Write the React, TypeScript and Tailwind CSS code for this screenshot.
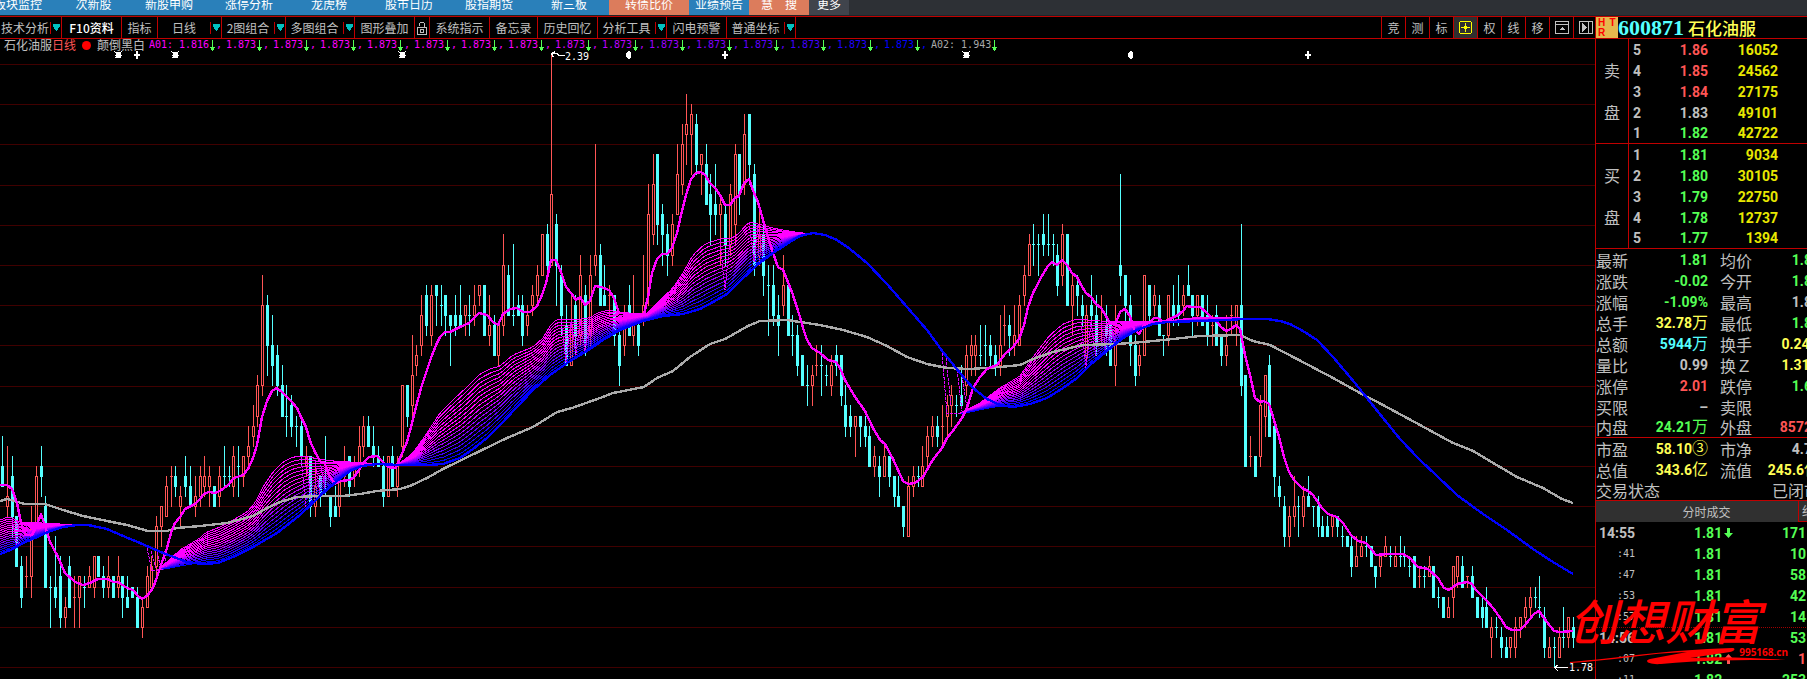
import type { ReactNode } from "react";
import clsx from "clsx";

type Point = [number, number];

const NAV = [
  { text: "板块监控", cls: "w-[58px] justify-end pr-4 bg-[#2a80ba]" },
  { text: "次新股", cls: "w-[71px] justify-center bg-[#2a80ba]" },
  { text: "新股申购", cls: "w-20 justify-center bg-[#2a80ba]" },
  { text: "涨停分析", cls: "w-20 justify-center bg-[#2a80ba]" },
  { text: "龙虎榜", cls: "w-20 justify-center bg-[#2a80ba]" },
  { text: "股市日历", cls: "w-20 justify-center bg-[#2a80ba]" },
  { text: "股指期货", cls: "w-20 justify-center bg-[#2a80ba]" },
  { text: "新三板", cls: "w-20 justify-center bg-[#2a80ba]" },
  { text: "转债比价", cls: "w-20 justify-center bg-[#dc7c5c]" },
  { text: "业绩预告", cls: "w-[60px] justify-center bg-[#2a80ba]" },
  { text: "慧　搜", cls: "w-[60px] justify-center bg-[#dc7c5c]" },
  { text: "更多", cls: "w-10 justify-center bg-[#40444c]" },
];

const TOOLS = [
  { text: "技术分析", cls: "w-[62px]", caret: true },
  { text: "F10资料", cls: "w-[60px] text-white font-medium" },
  { text: "指标", cls: "w-9" },
  { text: "日线", cls: "w-16", caret: true },
  { text: "2图组合", cls: "w-16", caret: true },
  { text: "多图组合", cls: "w-[69px]", caret: true },
  { text: "图形叠加", cls: "w-[60px]" },
  { text: "lock", cls: "w-[15px]" },
  { text: "系统指示", cls: "w-[60px]" },
  { text: "备忘录", cls: "w-12" },
  { text: "历史回忆", cls: "w-[60px]" },
  { text: "分析工具", cls: "w-[69px]", caret: true },
  { text: "闪电预警", cls: "w-[60px]" },
  { text: "普通坐标", cls: "w-[69px]", caret: true },
];

const ASKS = [
  ["5", "1.86", "16052", "text-[#ff5555]"],
  ["4", "1.85", "24562", "text-[#ff5555]"],
  ["3", "1.84", "27175", "text-[#ff5555]"],
  ["2", "1.83", "49101", "text-[#c0c0c0]"],
  ["1", "1.82", "42722", "text-[#55ff55]"],
];

const BIDS = [
  ["1", "1.81", "9034", "text-[#55ff55]"],
  ["2", "1.80", "30105", "text-[#55ff55]"],
  ["3", "1.79", "22750", "text-[#55ff55]"],
  ["4", "1.78", "12737", "text-[#55ff55]"],
  ["5", "1.77", "1394", "text-[#55ff55]"],
];

const GREEN = "text-[#55ff55]";
const RED = "text-[#ff5555]";
const YELLOW = "text-[#ffff55]";
const CYAN = "text-[#55ffff]";
const GRAY = "text-[#c0c0c0]";

const QUOTE = [
  ["最新", "1.81", GREEN, "均价", "1.81", GREEN],
  ["涨跌", "-0.02", GREEN, "今开", "1.82", GREEN],
  ["涨幅", "-1.09%", GREEN, "最高", "1.83", GRAY],
  ["总手", "32.78万", YELLOW, "最低", "1.80", GREEN],
  ["总额", "5944万", CYAN, "换手", "0.24%", YELLOW],
  ["量比", "0.99", GRAY, "换Ｚ", "1.31%", YELLOW],
  ["涨停", "2.01", RED, "跌停", "1.65", GREEN],
  ["买限", "–", GRAY, "卖限", "", GRAY],
  ["内盘", "24.21万", GREEN, "外盘", "85727", RED],
];

const VALUATION = [
  ["市盈", "58.10③", YELLOW, "市净", "4.70", GRAY],
  ["总值", "343.6亿", YELLOW, "流值", "245.6亿", YELLOW],
];

const TRADES = [
  { time: "14:55", price: "1.81", dir: "down", vol: "171" },
  { time: ":41", price: "1.81", vol: "10" },
  { time: ":47", price: "1.81", vol: "58" },
  { time: ":53", price: "1.81", vol: "42" },
  { time: ":57", price: "1.81", vol: "14" },
  { time: "14:56", price: "1.81", vol: "53" },
  { time: ":07", price: "1.82", dir: "up", vol: "1" },
  { time: ":11", price: "1.82", vol: "253" },
];

// high, body top, body bottom, low in ticks above 1.78, then r(ise) or f(all)
const CANDLES = `
23 20 18 18 f,22 17 16 15 r,21 19 15 13 f,15 15 10 10 f,11 10 7 6 f,11 9 9 8 r,16 14 9 7 r,20 19 13 13 r,22 20 19 17 f,17 16 8 8 f,
9 8 8 4 f,13 8 7 6 f,11 9 5 4 f,7 6 5 4 r,11 10 6 6 f,9 7 7 4 r,9 9 7 4 r,9 8 8 6 f,10 9 8 8 r,11 11 8 7 r,
11 11 9 9 f,10 9 8 7 f,11 9 8 7 r,9 9 7 7 f,11 9 8 7 r,9 9 7 5 f,9 7 6 6 f,8 8 7 7 f,8 7 4 4 f,7 6 4 3 r,
10 9 6 6 r,11 10 8 8 r,15 14 10 9 r,16 16 14 12 r,19 18 15 15 r,20 19 19 16 r,20 19 18 17 f,18 17 16 14 r,21 19 18 17 f,20 18 16 16 f,
19 17 16 15 r,20 19 17 16 r,21 19 18 17 r,20 19 18 16 r,18 18 16 16 f,20 19 17 16 r,22 19 19 18 f,20 19 19 18 f,22 21 18 17 r,22 20 20 17 f,
21 21 19 18 r,24 22 21 20 r,26 24 23 22 r,29 28 25 24 r,39 36 28 27 r,37 36 32 29 f,35 32 30 28 f,32 31 28 27 f,30 28 25 25 f,28 25 25 23 f,
27 26 24 23 f,25 24 24 22 f,25 24 21 20 f,22 21 20 19 r,21 21 16 15 f,20 18 16 15 r,19 19 17 16 f,23 17 17 17 f,17 17 15 14 f,18 16 15 15 f,
20 19 16 15 r,22 20 19 18 r,21 21 18 17 f,21 20 19 18 r,24 22 20 19 r,25 24 22 21 r,25 24 22 22 f,24 22 21 20 f,22 21 20 20 f,21 20 17 16 f,
21 21 17 17 r,22 21 18 18 f,21 20 18 17 r,28 28 22 21 r,28 28 25 24 f,33 29 26 25 r,32 31 30 29 r,37 35 32 31 r,38 37 34 33 f,38 37 33 32 r,
38 38 37 34 f,38 36 36 34 f,37 37 35 33 f,35 35 34 30 f,37 35 34 33 f,38 35 34 34 f,36 36 35 33 r,37 35 35 33 f,38 36 35 34 r,38 38 37 36 r,
38 38 33 33 f,37 34 33 32 r,35 34 31 31 f,34 34 31 30 r,43 40 34 33 r,40 39 35 35 f,42 35 35 34 f,37 36 35 35 f,37 36 33 32 f,36 35 34 33 r,
38 37 36 35 r,40 39 37 36 r,43 43 39 39 r,44 43 40 39 f,61 47 40 40 r,45 44 40 36 f,40 39 35 33 f,36 34 30 30 f,37 34 30 30 r,37 36 33 31 f,
41 39 33 32 r,38 37 32 31 f,41 39 33 32 r,52 41 40 39 r,42 41 36 36 f,40 37 36 36 f,38 37 37 35 r,37 37 33 32 f,35 33 30 28 f,36 35 32 31 r,
38 36 33 33 f,39 34 33 32 r,35 34 32 31 f,41 36 35 34 r,48 45 37 36 r,51 48 43 42 r,51 51 44 42 f,46 45 43 40 f,44 43 41 39 f,45 44 41 40 r,
52 49 45 45 r,54 52 48 47 r,57 54 53 50 r,56 55 53 49 r,55 54 50 49 f,51 51 50 47 r,52 50 46 46 f,49 47 45 42 f,50 46 45 43 f,47 46 45 40 r,
46 45 42 40 f,48 47 42 41 r,52 51 44 42 r,51 51 47 45 f,55 53 48 47 r,55 55 50 48 f,50 49 40 39 f,46 43 41 40 r,44 43 39 37 f,40 38 38 33 f,
40 38 35 34 f,37 35 34 31 f,41 38 36 35 r,38 38 33 33 f,35 33 33 31 f,34 33 30 29 f,31 31 28 28 f,30 28 28 26 f,30 29 28 26 r,32 30 30 29 r,
32 30 30 27 f,30 29 29 28 f,31 30 28 27 r,32 31 30 29 f,31 31 27 26 f,28 26 24 23 f,26 25 24 23 f,25 25 24 21 r,25 25 24 22 f,25 24 23 22 f,
24 23 20 20 f,22 21 20 19 r,21 20 19 17 f,22 21 19 19 r,21 21 19 18 f,19 19 17 16 f,19 17 16 16 f,16 16 14 13 f,19 18 13 13 r,20 19 18 17 r,
20 19 19 18 f,22 20 18 18 r,24 23 21 20 r,25 24 23 22 r,25 24 23 22 f,26 24 24 22 r,27 26 25 23 r,28 27 26 24 r,27 26 26 25 f,30 27 26 26 f,
32 31 28 27 r,33 32 31 29 r,33 32 31 29 r,34 31 31 30 f,34 32 32 30 f,33 32 31 30 f,32 31 30 29 f,35 32 30 29 r,36 34 34 32 r,35 34 33 31 f,
36 33 32 31 r,37 36 32 32 r,40 39 37 36 r,43 42 39 39 r,44 42 42 40 f,43 42 42 39 f,45 43 42 41 f,45 42 42 41 f,43 42 42 40 f,42 41 38 37 f,
44 43 39 38 r,43 43 36 36 f,39 38 36 33 r,39 38 37 35 f,37 36 35 34 f,36 35 31 30 r,39 36 35 34 f,37 35 32 31 f,37 34 34 32 r,36 34 33 31 f,
34 34 30 30 f,36 32 30 28 r,49 40 39 37 f,39 39 36 34 f,37 36 32 30 f,33 32 29 28 f,32 31 30 29 r,39 39 31 31 r,38 38 35 34 f,38 37 36 35 r,
37 36 33 33 f,33 33 33 31 f,37 37 33 32 r,38 36 35 34 f,39 36 35 34 f,38 37 36 35 r,40 38 37 37 f,37 37 35 33 f,37 37 35 34 r,37 37 34 34 f,
37 35 33 32 f,35 34 34 32 r,36 35 32 32 f,33 33 31 30 f,35 32 31 30 r,36 35 35 33 r,36 36 34 32 r,44 36 28 27 f,29 29 20 20 f,23 21 21 20 r,
21 21 19 19 f,27 26 21 20 r,29 29 25 23 r,31 30 23 23 f,24 24 19 17 f,19 18 17 16 f,17 16 13 12 f,16 15 13 12 r,19 16 15 14 r,17 16 16 13 f,
18 17 15 14 r,19 17 16 16 f,16 16 16 14 f,17 16 14 13 f,15 14 13 13 f,15 14 13 13 f,15 15 14 13 r,15 15 14 13 f,14 13 13 12 f,13 13 12 12 f,
13 12 10 9 f,13 11 10 10 r,13 12 11 11 r,13 12 12 11 f,12 12 10 10 f,10 10 9 8 f,11 11 10 9 r,13 12 11 11 r,12 11 11 10 f,12 11 10 10 r,
13 11 11 10 f,12 11 11 10 f,11 10 10 9 f,11 11 8 8 f,10 9 9 8 r,10 9 9 8 f,11 10 9 9 r,10 10 7 7 f,8 7 7 6 f,7 7 5 5 f,
7 6 5 5 r,10 10 7 5 r,11 11 9 8 r,11 10 8 8 f,9 9 9 8 r,10 9 7 7 f,7 7 5 5 f,7 6 5 4 f,8 6 4 4 f,5 4 3 1 r,
5 4 4 3 f,4 3 2 1 f,3 2 1 1 f,3 3 2 1 r,5 4 2 1 r,5 5 4 3 r,7 6 5 4 r,8 7 6 5 r,8 7 7 6 f,9 6 6 5 f,
6 5 2 1 f,3 2 1 1 r,3 2 2 0 f,4 3 1 1 r,6 3 3 2 f,5 5 3 2 r,5 4 3 2 f`
  .split(",")
  .map((row) => {
    const [high, top, bottom, low, kind] = row.trim().split(" ");
    return { high: +high, top: +top, bottom: +bottom, low: +low, rise: kind === "r" };
  });

const FAST =
  "0,485 7,485 12,489 17,503 21,523 26,535 32,535 36,527 41,514 45,526 50,542 57,555 65,573 75,582 83,585 90,583 98,579 108,579 113,582 118,582 127,588 133,590 138,596 142,599 147,596 153,588 157,577 161,565 167,548 171,533 175,523 180,517 185,509 195,504 200,499 204,494 209,492 215,493 220,491 228,485 234,478 243,475 248,469 253,458 257,445 262,417 267,401 272,391 277,388 283,393 291,401 297,408 301,417 306,427 310,441 315,452 320,461 325,464 330,477 335,484 340,481 350,480 354,477 359,470 363,463 369,457 377,456 383,462 388,467 396,468 400,458 407,442 412,423 416,407 421,388 426,373 431,358 436,345 440,337 445,332 450,332 460,327 469,323 479,313 487,315 493,322 498,325 503,314 510,309 517,308 523,312 530,312 537,306 542,295 546,283 551,260 556,260 561,272 566,287 571,293 576,300 580,297 585,305 590,301 595,286 601,287 609,290 614,298 619,313 633,314 644,314 648,297 652,273 657,259 662,254 667,254 672,248 677,233 681,215 686,195 691,179 696,173 701,172 705,175 710,183 715,188 720,195 725,205 730,205 735,198 739,196 744,183 749,179 754,193 758,202 763,220 768,237 773,253 778,267 783,270 792,292 800,317 803,328 807,340 812,348 820,353 828,360 836,362 840,368 845,380 855,397 865,411 873,428 880,440 885,444 893,459 898,470 903,481 908,484 915,483 923,477 928,468 932,461 942,448 947,438 952,432 962,418 967,408 973,388 980,377 987,369 997,365 1005,354 1013,347 1019,339 1024,325 1028,307 1033,293 1043,274 1048,266 1052,262 1057,265 1062,260 1067,265 1072,273 1077,277 1081,285 1086,293 1091,297 1096,304 1101,308 1106,316 1110,323 1115,325 1120,312 1125,309 1130,316 1134,329 1139,334 1144,325 1150,322 1154,318 1158,318 1163,322 1168,320 1178,315 1183,311 1187,306 1192,307 1200,307 1207,313 1211,317 1216,320 1221,327 1226,331 1231,329 1236,325 1240,329 1245,355 1250,375 1255,398 1260,402 1264,401 1269,404 1274,420 1279,437 1284,457 1289,472 1294,480 1302,488 1308,491 1313,495 1322,508 1328,514 1337,517 1343,523 1351,535 1358,541 1366,543 1376,555 1387,554 1403,554 1410,558 1418,567 1428,569 1438,578 1444,588 1449,590 1457,584 1467,582 1472,584 1476,590 1486,600 1493,608 1501,619 1506,627 1512,630 1520,630 1525,625 1534,614 1539,611 1544,618 1554,631 1560,632 1573,631";

const SLOW =
  "0,554 13,549 23,543 37,537 48,532 63,527 77,525 88,525 107,529 123,536 140,543 163,553 187,562 203,564 218,563 233,557 253,547 277,533 300,515 320,496 337,481 350,471 362,466 377,464 400,465 427,465 443,464 460,458 473,449 487,438 500,425 517,407 533,390 550,375 567,363 587,351 603,340 620,330 643,321 663,316 683,314 700,309 713,302 727,294 740,281 757,265 773,253 790,242 800,236 813,233 825,235 837,240 850,249 867,263 887,284 907,307 927,330 943,352 960,373 973,388 987,399 1000,405 1013,407 1030,404 1047,398 1063,388 1077,378 1090,365 1107,351 1123,338 1137,330 1153,324 1167,322 1200,321 1227,320 1243,319 1267,319 1280,321 1290,324 1303,331 1317,340 1333,357 1350,377 1367,398 1383,418 1400,439 1420,460 1437,476 1457,495 1483,514 1507,530 1533,549 1553,562 1573,574";

const BASE =
  "0,501 7,499 25,504 45,504 63,510 83,516 107,521 127,525 148,531 167,531 177,528 200,526 227,523 253,516 267,508 280,502 297,497 317,496 343,496 360,494 377,491 400,489 410,486 427,478 443,469 480,451 507,438 533,427 557,412 572,408 600,398 613,393 644,387 657,378 673,371 690,357 710,344 725,339 748,326 760,321 787,320 800,322 820,325 843,330 867,337 887,346 907,357 927,364 947,368 970,369 1000,367 1020,365 1033,359 1053,352 1083,345 1117,344 1143,342 1173,339 1200,336 1240,335 1253,341 1270,345 1297,359 1333,378 1360,393 1383,405 1420,425 1453,443 1473,451 1500,467 1517,477 1543,488 1562,499 1573,503";

// upper edge of each fan of averages, and the floor it starts from
const FANS = [
  { top: "0,520 8,517 12,518 20,522 43,523 77,525", floor: "" },
  {
    top: "160,568 167,562 180,550 200,538 205,533 220,527 233,520 247,512 255,503 263,487 273,472 283,462 293,457 302,456 310,457 317,459 333,461 367,463 387,464",
    floor: "160,570 187,566 205,564",
  },
  {
    top: "395,465 400,463 413,453 427,433 440,413 453,400 467,387 480,374 490,369 500,366 513,355 533,347 543,338 552,323 558,319 573,320 590,318 597,313 609,310 620,313 647,313 657,303 673,288 683,273 693,255 705,244 720,239 733,238 740,232 749,222 758,224 777,229 800,233 813,233",
    floor: "",
  },
  {
    top: "960,413 980,403 1000,388 1020,376 1033,357 1050,335 1063,324 1077,319 1100,321 1133,322 1167,321 1200,317 1240,318",
    floor: "960,414 987,409 1004,407",
  },
];

const SPIKES = [
  "12,519 17,545 21,541", "17,521 21,538 26,534", "26,524 31,537",
  "147,548 152,571 163,569", "151,551 156,568", "157,552 161,569", "164,554 167,567",
  "301,457 306,507", "306,457 311,500", "315,460 320,495", "320,461 325,488",
  "561,320 566,362 571,321", "571,321 576,355 580,321", "580,320 585,351 590,319",
  "720,240 725,290 730,240", "749,222 754,262 758,225", "758,225 763,257", "767,228 771,250",
  "942,353 947,414 962,413", "946,358 951,405", "957,370 962,411", "962,376 967,408",
  "1081,322 1086,368 1091,322", "1091,321 1096,357", "1101,321 1106,350", "1110,322 1115,342",
];

const MARKS: { x: number; kind: "star" | "plus" | "pin" }[] = [
  { x: 118, kind: "star" },
  { x: 136, kind: "plus" },
  { x: 175, kind: "star" },
  { x: 402, kind: "star" },
  { x: 628, kind: "pin" },
  { x: 724, kind: "plus" },
  { x: 966, kind: "star" },
  { x: 1130, kind: "pin" },
  { x: 1307, kind: "plus" },
];

const FAN_LINES = 16;

const parse = (s: string): Point[] =>
  s ? s.split(" ").map((p) => p.split(",").map(Number) as Point) : [];

function valueAt(points: Point[], x: number) {
  for (let i = 1; i < points.length; i++) {
    const [x0, y0] = points[i - 1];
    const [x1, y1] = points[i];
    if (x >= x0 && x <= x1) return y0 + ((y1 - y0) * (x - x0)) / (x1 - x0);
  }
  return -Infinity;
}

const slowPoints = parse(SLOW);
const tickY = (n: number) => Math.round(667 - n * 10.06);
const fade = (i: number) => `rgb(${Math.round(Math.min(255, (255 * (15 - i)) / 8))},0,255)`;

function fanLines(top: string, floor: string) {
  const upper = parse(top);
  const lower = parse(floor);
  const start = upper[0][0];
  const end = upper[upper.length - 1][0];
  return Array.from({ length: FAN_LINES }, (_, k) => {
    const t = k / FAN_LINES;
    const pts: string[] = [];
    for (let x = start; x <= end; x += 4) {
      const a = valueAt(upper, x);
      const b = Math.max(valueAt(slowPoints, x), valueAt(lower, x));
      pts.push(`${x},${(a + (b - a) * t).toFixed(1)}`);
    }
    return pts.join(" ");
  });
}

function Candle({ index }: { index: number }) {
  const { high, top, bottom, low, rise } = CANDLES[index];
  const x = Math.floor(2.5 + (index * 400) / 83);
  const color = rise ? "#ff5555" : "#55ffff";
  const y1 = tickY(top);
  const y2 = tickY(bottom);
  return (
    <g fill={color}>
      <rect x={x} y={tickY(high)} width={1} height={tickY(low) - tickY(high) + 1} />
      {rise && top !== bottom ? (
        <rect x={x - 0.5} y={y1 + 0.5} width={2} height={y2 - y1} fill="#000" stroke={color} />
      ) : (
        <rect x={x - 1} y={y1} width={3} height={y2 - y1 + 1} />
      )}
    </g>
  );
}

function Mark({ x, kind }: { x: number; kind: "star" | "plus" | "pin" }) {
  if (kind === "plus") return <path d={`M${x} 51h2v3h2v2h-2v3h-2v-3h-2v-2h2z`} fill="#fff" />;
  if (kind === "pin") return <path d={`M${x} 51h1l2 2v4l-2 2h-1l-2-2v-4z`} fill="#fff" />;
  return (
    <g stroke="#fff">
      <rect x={x - 2} y={52} width={5} height={6} fill="#fff" stroke="none" />
      <path d={`M${x - 3.5} 51.5l7 7M${x + 3.5} 51.5l-7 7M${x - 3.5} 55h7`} />
    </g>
  );
}

function Chart() {
  return (
    <svg viewBox="0 53 1595 626" className="block w-full overflow-visible" shapeRendering="crispEdges" role="img" aria-label="石化油服 日线">
      {Array.from({ length: 16 }, (_, i) => (
        <rect key={i} x={0} y={Math.round(64 + i * 40.2)} width={1595} height={1} fill="#400000" />
      ))}
      {CANDLES.map((_, i) => (
        <Candle key={i} index={i} />
      ))}
      <g fill="none" strokeWidth={1}>
        {FANS.map((fan) =>
          fanLines(fan.top, fan.floor).map((pts, k) => (
            <polyline key={`${fan.top.length}-${k}`} points={pts} stroke={fade(k)} />
          )),
        )}
        {SPIKES.map((pts) => (
          <polyline key={pts} points={pts} stroke="#e000ff" strokeDasharray="3 1" />
        ))}
      </g>
      <g fill="none" strokeWidth={2.4} strokeLinejoin="round">
        <polyline points={BASE} stroke="#aaaaaa" />
        <polyline points={FAST} stroke="#ff00ff" />
        <polyline points={SLOW} stroke="#0000ff" />
      </g>
      {MARKS.map((m) => (
        <Mark key={m.x} {...m} />
      ))}
      <path d="M565 55.5h-6l-2-2h-6M551.5 53.5l4-2M551.5 53.5l2 4" fill="none" stroke="#fff" />
      <path d="M1554 667.5h14M1554.5 667.5l4-3M1554.5 667.5l4 4" fill="none" stroke="#fff" />
      <g fill="#fff" className="font-['DejaVu_Sans_Mono',monospace] text-[10px]">
        <text x={565} y={60}>2.39</text>
        <text x={1569} y={671}>1.78</text>
      </g>
    </svg>
  );
}

function DownArrow() {
  return (
    <svg viewBox="0 0 5 11" className="h-[11px] w-[5px]" shapeRendering="crispEdges" aria-hidden>
      <path d="M2 0h1v7h2l-2 4h-1l-2-4h2z" fill="#55ff55" />
    </svg>
  );
}

function Legend() {
  return (
    <div className="flex h-[14px] items-center overflow-hidden whitespace-nowrap pb-[2px] pl-1 text-[12px] leading-[14px]">
      <span className="w-12 shrink-0">石化油服</span>
      <span className="w-6 shrink-0 text-[#ff5555]">日线</span>
      <span className="mx-[6px] size-[9px] shrink-0 rounded-full bg-[#ff0000]" />
      <span className="w-[52px] shrink-0">颠倒黑白</span>
      <div className="flex font-['DejaVu_Sans_Mono',monospace] text-[10px]">
        <span className="w-[30px] text-[#ff00ff]">A01:</span>
        {Array.from({ length: 16 }, (_, i) => (
          <span key={i} className="flex w-[47px] items-center gap-px" style={{ color: fade(i) }}>
            {i === 0 ? "1.816" : "1.873"}
            <DownArrow />,
          </span>
        ))}
        <span className="flex items-center gap-px text-[#aaaaaa]">
          A02: 1.943
          <DownArrow />
        </span>
      </div>
    </div>
  );
}

function LockIcon() {
  return (
    <svg viewBox="0 0 12 14" className="h-[14px] w-3" fill="none" stroke="#c0c0c0" shapeRendering="crispEdges" aria-hidden>
      <rect x="1.5" y="6.5" width="9" height="7" />
      <path d="M3.5 4.500v-2l1-1h3l1 1v4M4.500 8.500h3v3h-3z" />
    </svg>
  );
}

function ToolIcon({ children }: { children: ReactNode }) {
  return (
    <svg viewBox="0 0 14 14" className="size-[14px] shrink-0" fill="none" stroke="currentColor" shapeRendering="crispEdges" aria-hidden>
      {children}
    </svg>
  );
}

const toolButton = "flex h-full w-6 shrink-0 items-center justify-center border-l border-[#c00000]";

function Toolbar() {
  return (
    <div className="flex h-[23px] justify-between overflow-hidden border-y border-[#c00000] text-[12px]">
      <div className="flex">
        {TOOLS.map((t) => (
          <button key={t.text} aria-label={t.text} className={clsx("flex h-full shrink-0 items-center whitespace-nowrap border-r border-[#c00000]", t.cls)}>
            <span className="flex min-w-0 flex-1 justify-center">{t.text === "lock" ? <LockIcon /> : t.text}</span>
            {t.caret && (
              <span className="flex h-3 w-[11px] shrink-0 items-center justify-center border-l border-[#c00000]">
                <svg viewBox="0 0 7 7" className="size-[7px]" shapeRendering="crispEdges" aria-hidden>
                  <path d="M0 0h7v2L4 7H3L0 2z" fill="#00c0c0" />
                </svg>
              </span>
            )}
          </button>
        ))}
      </div>
      <div className="-mr-[2px] flex">
        <button className={toolButton}>竞</button>
        <button className={toolButton}>测</button>
        <button className={toolButton}>标</button>
        <button aria-label="十字光标" className={clsx(toolButton, "bg-[#303030] text-[#ffff00]")}>
          <ToolIcon>
            <rect x="0.500" y="0.500" width="12" height="12" rx="2" />
            <path d="M6.500 2v9M2 6.500h9M4.500 6.500l2-2 2 2-2 2z" />
          </ToolIcon>
        </button>
        <button className={toolButton}>权</button>
        <button className={toolButton}>线</button>
        <button className={toolButton}>移</button>
        <button aria-label="窗口" className={toolButton}>
          <ToolIcon>
            <path d="M0.500 0.500h13v12h-13zM0 3.500h14" />
            <path d="M7 6l3 3H4z" fill="currentColor" stroke="none" />
          </ToolIcon>
        </button>
        <button aria-label="侧栏" className={toolButton}>
          <ToolIcon>
            <path d="M0.500 0.500h13v12h-13zM9.500 0v13" />
            <path d="M3 2l5 4.500L3 11z" fill="currentColor" stroke="none" />
          </ToolIcon>
        </button>
      </div>
    </div>
  );
}

function Book({ side, rows }: { side: string; rows: string[][] }) {
  return (
    <table className="w-[212px] table-fixed border-separate border-spacing-0">
      <tbody>
        {rows.map(([level, price, vol, color], i) => (
          <tr key={level} className="h-[21px] leading-5 last:[&>td]:border-b">
            {i === 0 && (
              <th rowSpan={5} className="w-[33px] border-b border-r border-[#c00000] p-0 text-[16px] font-normal leading-[42px]">
                <span className="block">{side}</span>
                <span className="block">盘</span>
              </th>
            )}
            <td className="w-[18px] border-[#c00000] p-0 pl-1 font-['Roboto',sans-serif] text-[14px] font-bold">{level}</td>
            <td className={clsx("w-[61px] border-[#c00000] p-0 text-right font-['Roboto',sans-serif] text-[14px] font-bold", color)}>{price}</td>
            <td className="w-[70px] border-[#c00000] p-0 text-right font-['Roboto',sans-serif] text-[14px] font-bold text-[#e8e800]">{vol}</td>
            <td className="border-[#c00000] p-0" />
          </tr>
        ))}
      </tbody>
    </table>
  );
}

function Amount({ value }: { value: string }) {
  const unit = value.match(/[万亿③]$/)?.[0] ?? "";
  return (
    <span className="flex items-center justify-end">
      {unit ? value.slice(0, -1) : value}
      {unit && <span className="text-[16px] font-normal">{unit}</span>}
    </span>
  );
}

function Stats({ rows, ruled }: { rows: string[][]; ruled?: boolean }) {
  return (
    <table className="w-[224px] table-fixed border-separate border-spacing-0">
      <tbody>
        {rows.map(([a, av, ac, b, bv, bc]) => (
          <tr key={a} className={clsx("h-[21px] whitespace-nowrap leading-5", ruled && "last:[&>*]:border-b")}>
            <th className="w-9 border-[#c00000] p-0 text-left text-[16px] font-normal">{a}</th>
            <td className={clsx("w-[76px] border-[#c00000] p-0 font-['Roboto','Noto_Sans_CJK_SC',sans-serif] text-[14px] font-bold", ac)}>
              <Amount value={av} />
            </td>
            <th className="w-[60px] border-[#c00000] p-0 pl-3 text-left text-[16px] font-normal">{b}</th>
            <td className={clsx("border-[#c00000] p-0 font-['Roboto','Noto_Sans_CJK_SC',sans-serif] text-[14px] font-bold", bc)}>
              <Amount value={bv} />
            </td>
          </tr>
        ))}
      </tbody>
    </table>
  );
}

function Trades() {
  return (
    <table className="w-[212px] table-fixed border-separate border-spacing-0">
      <tbody>
        {TRADES.map((t) => {
          const full = t.time.length > 3;
          return (
            <tr key={t.time} className={clsx("h-[21px] font-['Roboto',sans-serif] text-[14px] font-bold leading-5 text-[#55ff55]", t.time === "14:56" && "[&>td]:border-t [&>td]:border-dotted [&>td]:border-[#a00000]")}>
              <td className={clsx("w-[98px] p-0 text-[#c0c0c0]", full ? "pl-[3px]" : "pl-[21px] font-['DejaVu_Sans_Mono',monospace] text-[10px] font-normal")}>{t.time}</td>
              <td className="w-[50px] p-0">
                <span className="flex items-center gap-[2px]">
                  {t.price}
                  {t.dir && (
                    <svg viewBox="0 0 9 10" className="h-[10px] w-[9px]" aria-hidden>
                      {t.dir === "down" ? (
                        <path d="M3 0h3v5h3L4.500 10 0 5h3z" fill="#55ff55" />
                      ) : (
                        <path d="M3 10h3V5h3L4.500 0 0 5h3z" fill="#ff5555" />
                      )}
                    </svg>
                  )}
                </span>
              </td>
              <td className={clsx("p-0 pr-[2px] text-right", t.dir === "up" && "text-[#ff5555]")}>{t.vol}</td>
            </tr>
          );
        })}
      </tbody>
    </table>
  );
}

function Sidebar() {
  return (
    <aside className="w-[212px] shrink-0 overflow-hidden border-l border-[#c00000]">
      <div className="flex h-[23px] items-center whitespace-nowrap border-y border-[#c00000]">
        <span className="grid h-full w-[22px] shrink-0 grid-cols-2 content-center justify-items-center bg-[#e4b84e] font-['Liberation_Sans',sans-serif] text-[10px] font-bold leading-[10px] text-[#ff0000]">
          <span>H</span>
          <span>T</span>
          <span>R</span>
        </span>
        <h1 className="flex items-center gap-1">
          <span className="font-['Liberation_Serif',serif] text-[22px] font-bold leading-[21px] text-[#55ffff]">600871</span>
          <span className="text-[17px] font-medium leading-[21px] text-[#ffff55]">石化油服</span>
        </h1>
      </div>
      <Book side="卖" rows={ASKS} />
      <Book side="买" rows={BIDS} />
      <Stats rows={QUOTE} ruled />
      <Stats rows={VALUATION} />
      <div className="flex h-[21px] w-[224px] items-center justify-between whitespace-nowrap border-b border-[#c00000] text-[16px]">
        <span>交易状态</span>
        <span>已闭市</span>
      </div>
      <div className="flex h-[21px] text-[12px]">
        <button className="w-[202px] shrink-0 bg-[#303030] pl-[19px]">分时成交</button>
        <button className="w-6 shrink-0 border-b border-l border-[#c00000] bg-[#303030] text-left pl-[3px]">细</button>
      </div>
      <Trades />
    </aside>
  );
}

function Watermark() {
  return (
    <div className="pointer-events-none absolute bottom-3 right-4 w-[222px] text-[#ff0000]">
      <p className="whitespace-nowrap text-[48px] font-medium italic leading-[56px]">创想财富</p>
      <svg viewBox="0 0 222 20" className="block w-full" aria-hidden>
        <path d="M1 15C50 11 95 3 163 1c4 0 3 3-2 4l-40 6c35-2 65 0 96 2-40 0-85 0-125 4-12 1-18-3-11-5l37-7C80 6 40 14 1 16z" fill="currentColor" />
      </svg>
      <p className="absolute bottom-[9px] right-[3px] font-['Noto_Sans',sans-serif] text-[10px] font-bold leading-3">995168.cn</p>
    </div>
  );
}

export default function App() {
  return (
    <div className="relative flex h-screen flex-col overflow-hidden bg-black font-['Noto_Sans_CJK_SC',sans-serif] text-[#c0c0c0]">
      <nav className="flex h-4 shrink-0 overflow-hidden border-b border-[#202428] bg-[#2d3035] text-[12px] leading-4 text-white">
        {NAV.map((n) => (
          <a key={n.text} href="#" className={clsx("flex shrink-0 items-end whitespace-nowrap pb-[3px]", n.cls)}>
            {n.text}
          </a>
        ))}
      </nav>
      <div className="flex min-h-0 flex-1">
        <main className="min-w-0 flex-1">
          <Toolbar />
          <Legend />
          <Chart />
        </main>
        <Sidebar />
      </div>
      <Watermark />
    </div>
  );
}
